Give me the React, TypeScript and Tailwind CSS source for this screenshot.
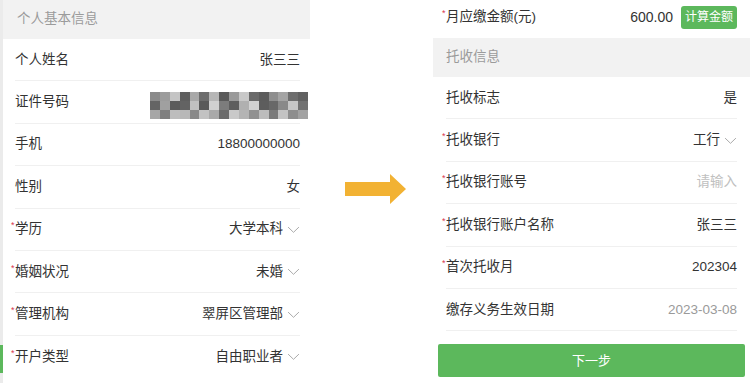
import React from 'react';

type Row = {
  label: string;
  value?: string;
  required?: boolean;
  select?: boolean;
  tone?: 'normal' | 'placeholder' | 'muted';
  mosaic?: boolean;
};

const leftRows: Row[] = [
  { label: '个人姓名', value: '张三三' },
  { label: '证件号码', mosaic: true },
  { label: '手机', value: '18800000000' },
  { label: '性别', value: '女' },
  { label: '学历', value: '大学本科', required: true, select: true },
  { label: '婚姻状况', value: '未婚', required: true, select: true },
  { label: '管理机构', value: '翠屏区管理部', required: true, select: true },
  { label: '开户类型', value: '自由职业者', required: true, select: true },
];

const rightRows: Row[] = [
  { label: '托收标志', value: '是' },
  { label: '托收银行', value: '工行', required: true, select: true },
  { label: '托收银行账号', value: '请输入', required: true, tone: 'placeholder' },
  { label: '托收银行账户名称', value: '张三三', required: true },
  { label: '首次托收月', value: '202304', required: true },
  { label: '缴存义务生效日期', value: '2023-03-08', tone: 'muted' },
];

// pixelated id number
const mosaicCells = [
  'bg-[#8a8a8a]', 'bg-[#9c9c9c]', 'bg-[#c4c4c4]', 'bg-[#5f5f5f]', 'bg-[#a8a8a8]', 'bg-[#6c6c6c]', 'bg-[#b6b6b6]', 'bg-[#5a5a5a]',
  'bg-[#9a9a9a]', 'bg-[#c8c8c8]', 'bg-[#6a6a6a]', 'bg-[#5c5c5c]', 'bg-[#8e8e8e]', 'bg-[#a4a4a4]', 'bg-[#6e6e6e]', 'bg-[#616161]',
  'bg-[#646464]', 'bg-[#a0a0a0]', 'bg-[#5b5b5b]', 'bg-[#636363]', 'bg-[#c0c0c0]', 'bg-[#595959]', 'bg-[#d0d0d0]', 'bg-[#7c7c7c]',
  'bg-[#5e5e5e]', 'bg-[#b0b0b0]', 'bg-[#d2d2d2]', 'bg-[#5d5d5d]', 'bg-[#686868]', 'bg-[#898989]', 'bg-[#c6c6c6]', 'bg-[#727272]',
  'bg-[#a6a6a6]', 'bg-[#7f7f7f]', 'bg-[#bdbdbd]', 'bg-[#b8b8b8]', 'bg-[#898989]', 'bg-[#c2c2c2]', 'bg-[#a9a9a9]', 'bg-[#6b6b6b]',
  'bg-[#c9c9c9]', 'bg-[#b4b4b4]', 'bg-[#919191]', 'bg-[#bcbcbc]', 'bg-[#7b7b7b]', 'bg-[#c3c3c3]', 'bg-[#8e8e8e]', 'bg-[#a2a2a2]',
];

const Chevron = () => (
  <svg width="13" height="13" viewBox="0 0 12 12" className="ml-[4px] shrink-0">
    <path d="M1 3.8 L6 8.6 L11 3.8" fill="none" stroke="#a8a8a8" strokeWidth="0.9" />
  </svg>
);

const FieldRow: React.FC<{ row: Row; last?: boolean }> = ({ row, last }) => {
  const valueColor =
    row.tone === 'placeholder' ? 'text-[#c0c0c0]' : row.tone === 'muted' ? 'text-[#9a9a9a]' : 'text-[#333333]';
  return (
    <div className="h-[42.4px] pl-[8px] pr-[10px]">
      <div className={`flex h-full items-center justify-between ${last ? '' : 'border-b border-[#f0f0f0]'}`}>
        <div className="flex items-center -ml-[4px]">
          <span className={`w-[4px] text-[9px] leading-none text-[#d9364f] -mt-[7px] ${row.required ? '' : 'invisible'}`}>*</span>
          <span className="text-[#333333]">{row.label}</span>
        </div>
        {row.mosaic ? (
          <div className="grid grid-cols-16 w-[158px] h-[27px] -mr-[8px] mt-[7px]">
            {mosaicCells.map((c, i) => (
              <div key={i} className={c} />
            ))}
          </div>
        ) : (
          <div className="flex items-center">
            <span className={valueColor}>{row.value}</span>
            {row.select && <Chevron />}
          </div>
        )}
      </div>
    </div>
  );
};

export default function App() {
  return (
    <div
      className="w-[750px] h-[383px] overflow-hidden bg-white flex text-[13.5px]"
      style={{ fontFamily: '"Liberation Sans", "Noto Sans CJK SC", sans-serif' }}
    >
      {/* left: personal info */}
      <div className="w-[310px] shrink-0 flex">
        <div className="w-[3px] flex flex-col bg-[#ebebeb]">
          <div className="flex-1" />
          <div className="h-[28px] mb-[10px] bg-[#5cb85c]" />
        </div>
        <div className="flex-1 flex flex-col">
          <div className="h-[39px] bg-[#f2f2f2] flex items-center pl-[14px] text-[#9b9b9b]">个人基本信息</div>
          <div className="pl-[4px]">
            {leftRows.map((r, i) => (
              <FieldRow key={r.label} row={r} last={i === leftRows.length - 1} />
            ))}
          </div>
        </div>
      </div>

      {/* arrow */}
      <div className="flex-1 flex items-center justify-center pl-[8px] pb-[6px]">
        <svg width="61" height="30" viewBox="0 0 61 30">
          <path d="M0 8 H45 V0 L61 15 L45 30 V22 H0 Z" fill="#f2b233" />
        </svg>
      </div>

      {/* right: collection info */}
      <div className="w-[317px] shrink-0 flex flex-col">
        <div className="h-[38px] pl-[13px] pr-[13px] flex items-center justify-between pb-[4px]">
          <div className="flex items-center -ml-[4px]">
            <span className="w-[4px] text-[9px] leading-none text-[#d9364f] -mt-[7px]">*</span>
            <span className="text-[#333333]">月应缴金额(元)</span>
          </div>
          <div className="flex items-center">
            <span className="text-[#333333] text-[14px]">600.00</span>
            <span className="ml-[8px] h-[23px] px-[4px] rounded-[3px] bg-[#5cb85c] text-white text-[12px] flex items-center">计算金额</span>
          </div>
        </div>
        <div className="h-[39px] bg-[#f2f2f2] flex items-center pl-[13px] text-[#9b9b9b]">托收信息</div>
        <div className="pl-[5px] pr-[3px]">
          {rightRows.map((r) => (
            <FieldRow key={r.label} row={r} />
          ))}
        </div>
        <div className="pl-[5px] pr-[5px] mt-[13px]">
          <button className="w-full h-[33px] bg-[#5cb85c] text-white text-[13px] rounded-[2px] flex items-center justify-center">
            下一步
          </button>
        </div>
      </div>
    </div>
  );
}
